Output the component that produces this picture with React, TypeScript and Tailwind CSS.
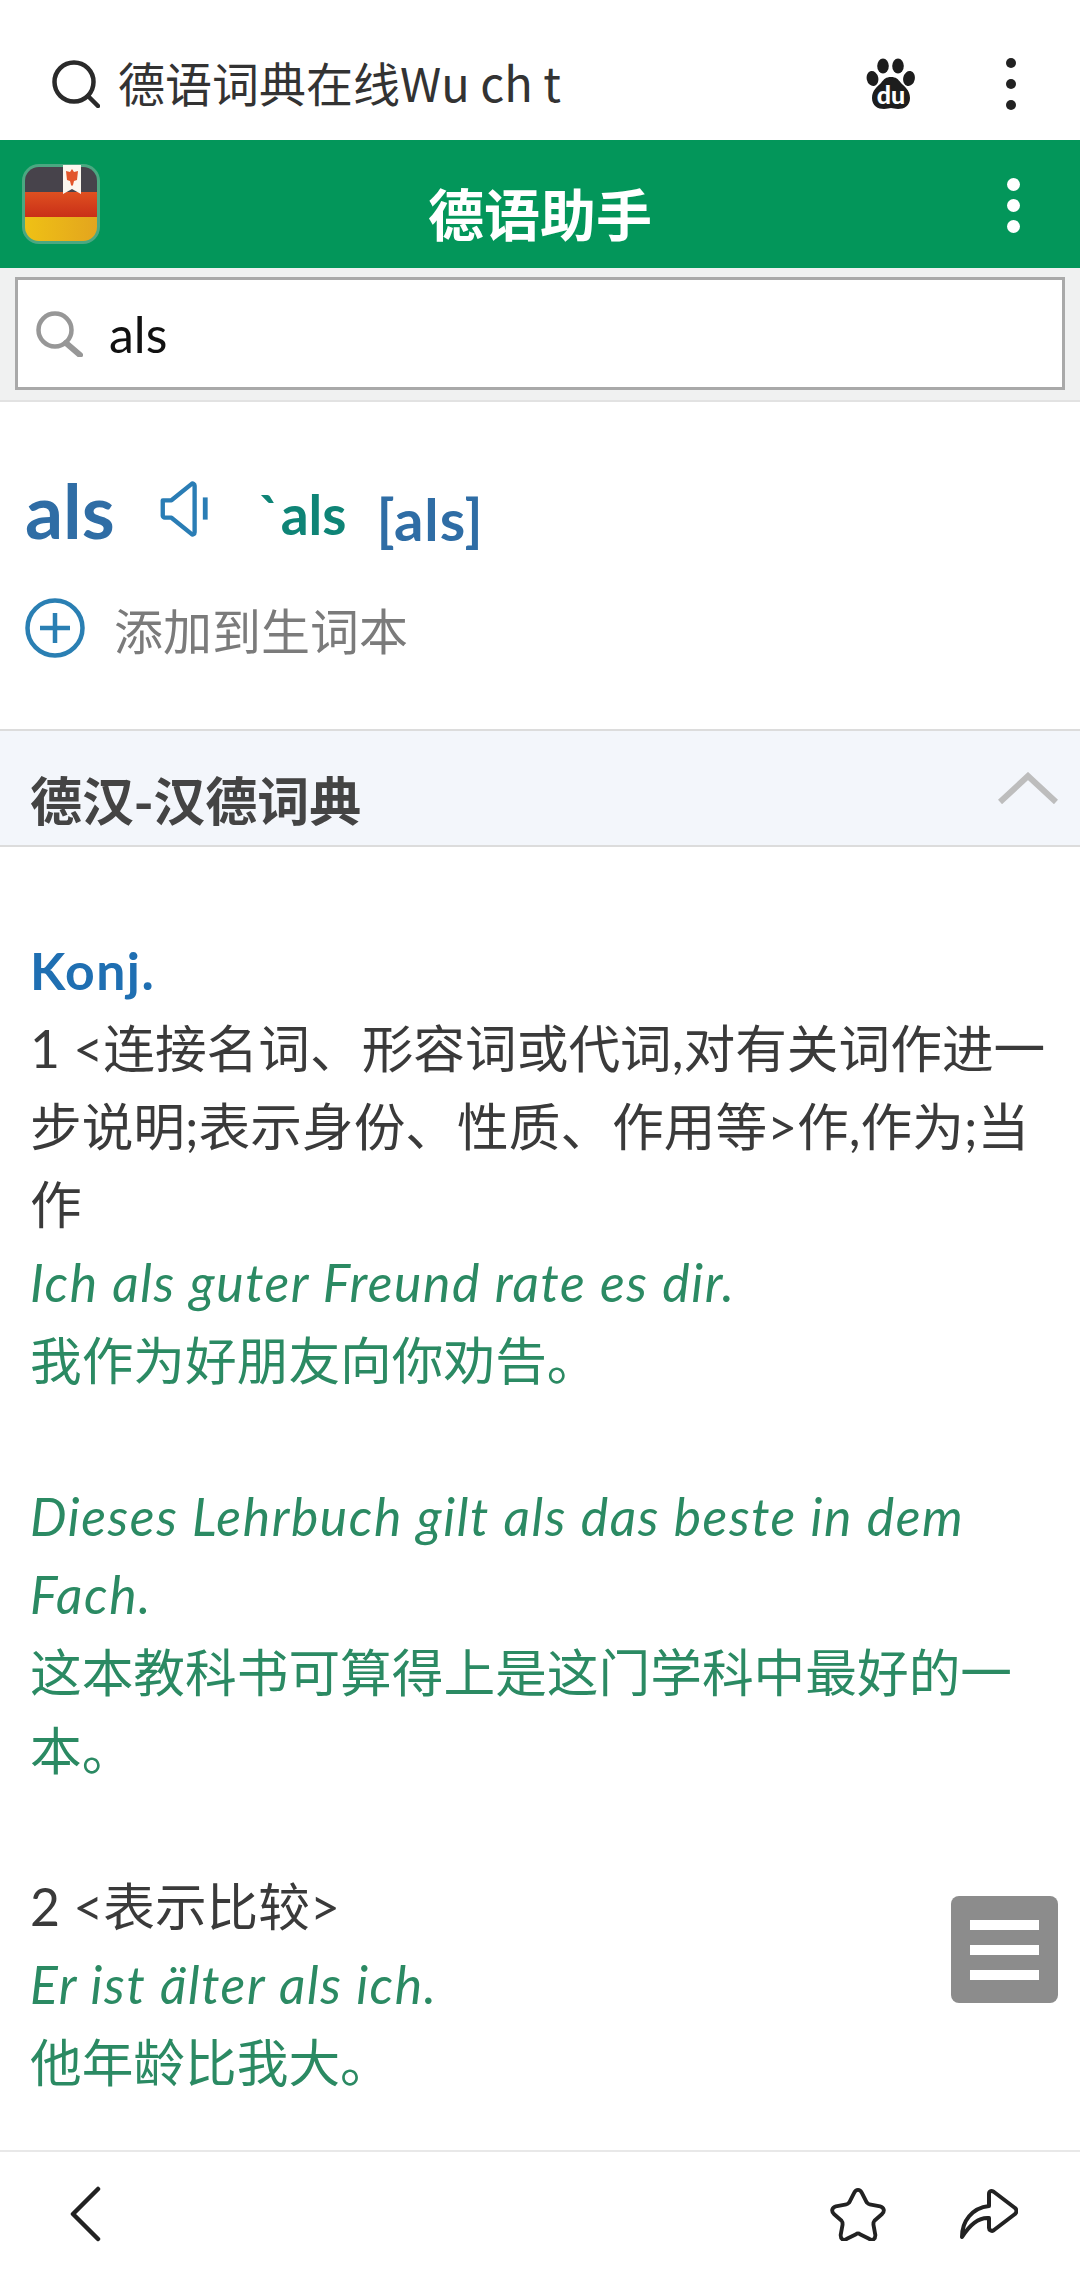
const font = "font-['Lato','Noto_Sans_CJK_SC',sans-serif]";

const example = "text-[#2b8a63]";
const exampleDe = "text-[#2b8a63] italic tracking-[1.6px]";

function TopSearchIcon() {
  return (
    <svg viewBox="0 0 48 48" className="w-[48px] h-[48px] shrink-0" fill="none" stroke="#2a2a2a" strokeWidth="4.5">
      <circle cx="22" cy="22" r="19.5" />
      <path d="M36 36l10 10" strokeLinecap="round" />
    </svg>
  );
}

function InputSearchIcon() {
  return (
    <svg viewBox="0 0 48 46" className="w-[48px] h-[46px] shrink-0" fill="none" stroke="#979797">
      <circle cx="20" cy="19" r="16.5" strokeWidth="4.5" />
      <path d="M31 32l14 12" strokeWidth="6" strokeLinecap="round" />
    </svg>
  );
}

function Dots({ className, dot }: { className: string; dot: string }) {
  return (
    <div className={className}>
      <span className={dot} />
      <span className={dot} />
      <span className={dot} />
    </div>
  );
}

function BaiduPaw() {
  return (
    <svg viewBox="0 0 50 52" className="w-[50px] h-[52px]">
      <ellipse cx="17" cy="8" rx="5.8" ry="7.6" fill="#1d1d1d" />
      <ellipse cx="32" cy="8" rx="5.8" ry="7.6" fill="#1d1d1d" />
      <ellipse cx="6.5" cy="20.5" rx="5.8" ry="7.6" fill="#1d1d1d" transform="rotate(-12 6.5 20.5)" />
      <ellipse cx="43" cy="20.5" rx="5.8" ry="7.6" fill="#1d1d1d" transform="rotate(12 43 20.5)" />
      <path
        d="M25 19c5 0 7 2 10 6 3 3 9 7 9 15 0 8-6 11-12 11-3 0-5-1-7-1s-4 1-7 1c-6 0-12-3-12-11 0-8 6-12 9-15 3-4 5-6 10-6z"
        fill="#1d1d1d"
      />
      <text x="25" y="46" textAnchor="middle" fontSize="25" fontWeight="900" fill="#fff" fontFamily="Lato, sans-serif">
        du
      </text>
    </svg>
  );
}

function AppLogo() {
  return (
    <svg viewBox="0 0 78 80" className="w-[78px] h-[80px] shrink-0">
      <defs>
        <clipPath id="logoClip">
          <rect x="3" y="3" width="72" height="74" rx="14" />
        </clipPath>
        <linearGradient id="logoYellow" x1="0" x2="1" y1="0" y2="0">
          <stop offset="0" stopColor="#efc115" />
          <stop offset="1" stopColor="#e3a51e" />
        </linearGradient>
        <linearGradient id="logoRed" x1="0" x2="0" y1="0" y2="1">
          <stop offset="0" stopColor="#df5020" />
          <stop offset="1" stopColor="#c92f18" />
        </linearGradient>
      </defs>
      <rect x="0" y="0" width="78" height="80" rx="17" fill="#4ba881" />
      <g clipPath="url(#logoClip)">
        <rect x="3" y="3" width="72" height="25" fill="#47434b" />
        <rect x="3" y="28" width="72" height="25" fill="url(#logoRed)" />
        <rect x="3" y="53" width="72" height="24" fill="url(#logoYellow)" />
      </g>
      <path d="M41 1h18v29l-9-5-9 5z" fill="#fbf6ee" />
      <path d="M50 5l2 3 4-1-1 9-3 1-1 4-1 1-1-1-1-4-3-1-1-9 4 1z" fill="#e2552a" />
    </svg>
  );
}

function StarIcon() {
  return (
    <svg viewBox="0 0 58 56" className="w-[56px] h-[54px]" fill="none" stroke="#222" strokeWidth="4" strokeLinejoin="round">
      <path d="M29 3c2 0 3 1 4 3l5 10c1 1 2 2 3 2l11 2c4 1 5 5 2 8l-8 7c-1 1-1 2-1 4l2 11c0 4-3 6-6 4l-10-5c-1-1-3-1-4 0l-10 5c-3 2-6 0-6-4l2-11c0-2 0-3-1-4l-8-7c-3-3-2-7 2-8l11-2c1 0 2-1 3-2l5-10c1-2 2-3 4-3z" />
    </svg>
  );
}

function ShareIcon() {
  return (
    <svg viewBox="0 0 58 52" className="w-[58px] h-[52px]" fill="none" stroke="#222" strokeWidth="4" strokeLinejoin="round" strokeLinecap="round">
      <path d="M2 49c0-16 10-29 27-31v-12c0-3 3-4 5-2l21 16c2 2 2 4 0 6l-21 16c-2 2-5 0-5-2v-10c-11-1-20 8-27 19z" />
    </svg>
  );
}

export default function App() {
  return (
    <div className={`${font} relative w-[1080px] h-[2275px] overflow-hidden bg-white flex flex-col`}>
      {/* browser bar */}
      <div className="h-[140px] flex items-center pl-[52px] pr-[64px] pt-[28px] shrink-0">
        <TopSearchIcon />
        <span className="ml-[18px] -mt-[6px] text-[47px] leading-none text-[#333] font-['Noto_Sans_CJK_SC',sans-serif] whitespace-pre">
          德语词典在线Wu ch t
        </span>
        <div className="ml-auto mr-[90px]">
          <BaiduPaw />
        </div>
        <Dots className="flex flex-col gap-[11px]" dot="block w-[10px] h-[10px] rounded-full bg-[#222]" />
      </div>

      {/* app header */}
      <div className="h-[128px] bg-[#03965a] flex items-center pl-[22px] pr-[60px] relative shrink-0">
        <AppLogo />
        <div className="absolute left-0 right-0 top-[44px] text-center text-[56px] leading-none font-bold text-white font-['Noto_Sans_CJK_SC',sans-serif]">
          德语助手
        </div>
        <Dots className="ml-auto flex flex-col gap-[8px] mt-[2px]" dot="block w-[13px] h-[13px] rounded-full bg-white" />
      </div>

      {/* search */}
      <div className="h-[134px] shrink-0 bg-[#f0f1f1] border-b-2 border-[#e2e2e2] px-[15px] pt-[9px]">
        <div className="h-[113px] bg-white border-[3px] border-[#a9a9a9] flex items-center pl-[17px]">
          <InputSearchIcon />
          <span className="ml-[26px] text-[50px] leading-none text-[#111]">als</span>
        </div>
      </div>

      {/* word */}
      <div className="h-[327px] shrink-0 pl-[25px] pt-[66px]">
        <div className="flex items-start h-[130px]">
          <span className="mt-[5px] text-[75px] leading-none font-bold text-[#2f6da5]">als</span>
          <svg viewBox="0 0 50 58" className="w-[50px] h-[56px] ml-[44px] mt-[13px]" fill="none" stroke="#2a7db5" strokeWidth="4.5" strokeLinejoin="round">
            <path d="M3 20h9L33 3c1-1 3 0 3 2v48c0 2-2 3-3 2L12 38H5c-1 0-2-1-2-2z" />
            <path d="M47 17v23" strokeWidth="5" />
          </svg>
          <span className="ml-[50px] mt-[19px] text-[55px] leading-none font-bold text-[#0e8476]">`als</span>
          <span className="ml-[30px] mt-[22px] text-[58px] tracking-[1px] leading-none font-bold text-[#2f6da5]">[als]</span>
        </div>
        <div className="flex items-center">
          <svg viewBox="0 0 60 60" className="w-[60px] h-[60px]" fill="none" stroke="#2a7fb3" strokeWidth="4.5">
            <circle cx="30" cy="30" r="27.5" />
            <path d="M15 30h30M30 15v30" />
          </svg>
          <span className="ml-[29px] text-[49px] leading-none text-[#7b7b7b] font-['Noto_Sans_CJK_SC',sans-serif]">添加到生词本</span>
        </div>
      </div>

      {/* dictionary header */}
      <div className="h-[118px] shrink-0 bg-[#f3f6fb] border-y-2 border-[#dcdcdc] flex items-start pl-[30px] pr-[22px]">
        <span className="mt-[42px] text-[52px] leading-none font-bold text-[#444] font-['Noto_Sans_CJK_SC',sans-serif]">德汉-汉德词典</span>
        <svg viewBox="0 0 60 32" className="w-[60px] h-[32px] ml-auto mt-[41px]" fill="none" stroke="#bdbdbd" strokeWidth="6">
          <path d="M2 30L30 4l28 26" />
        </svg>
      </div>

      {/* entry */}
      <div className="flex-1 min-h-0 pl-[30px] pr-[20px] pt-[84px] text-[51.7px] leading-[78px] text-[#3a3a3a] overflow-hidden">
        <div className="font-bold text-[#1f6fb2] tracking-[1.5px]">Konj.</div>
        <div>1 &lt;连接名词、形容词或代词,对有关词作进一步说明;表示身份、性质、作用等&gt;作,作为;当作</div>
        <div className={exampleDe}>Ich als guter Freund rate es dir.</div>
        <div className={example}>我作为好朋友向你劝告。</div>
        <div className="h-[78px]" />
        <div className={exampleDe}>Dieses Lehrbuch gilt als das beste in dem Fach.</div>
        <div className={example}>这本教科书可算得上是这门学科中最好的一本。</div>
        <div className="h-[78px]" />
        <div>2 &lt;表示比较&gt;</div>
        <div className={exampleDe}>Er ist älter als ich.</div>
        <div className={example}>他年龄比我大。</div>
      </div>

      {/* bottom bar */}
      <div className="h-[125px] shrink-0 border-t-2 border-[#e8e8e8] bg-white flex items-center pl-[68px] pr-[62px]">
        <svg viewBox="0 0 34 56" className="w-[34px] h-[56px]" fill="none" stroke="#222" strokeWidth="4.5" strokeLinecap="round" strokeLinejoin="round">
          <path d="M30 3L5 28l25 25" />
        </svg>
        <div className="ml-auto mr-[74px]">
          <StarIcon />
        </div>
        <ShareIcon />
      </div>

      {/* floating menu button */}
      <div className="absolute left-[951px] top-[1896px] w-[107px] h-[107px] rounded-[8px] bg-[#8c8c8c] flex flex-col items-center justify-center gap-[15px]">
        <span className="block w-[69px] h-[10px] bg-white" />
        <span className="block w-[69px] h-[10px] bg-white" />
        <span className="block w-[69px] h-[10px] bg-white" />
      </div>
    </div>
  );
}
